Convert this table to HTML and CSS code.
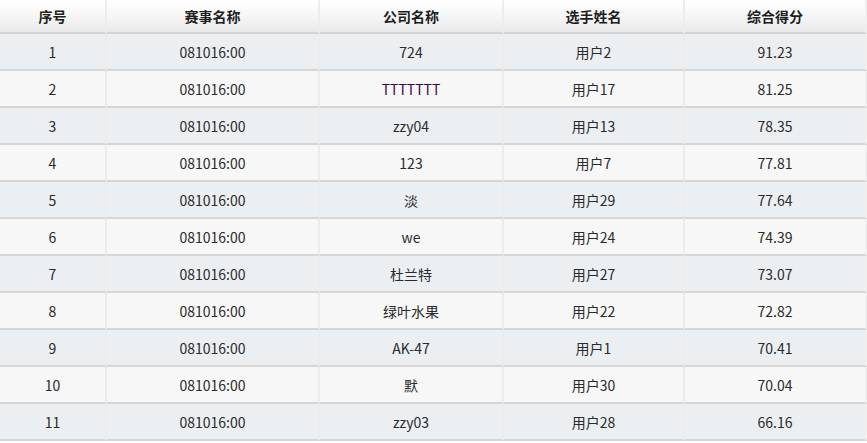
FILE: index.html
```html
<!DOCTYPE html>
<html lang="zh-CN">
<head>
<meta charset="utf-8">
<title>排名</title>
<link rel="stylesheet" href="styles.css">
</head>
<body>
<table class="rank">
  <colgroup>
    <col class="c1"><col class="c2"><col class="c3"><col class="c4"><col class="c5">
  </colgroup>
  <thead>
    <tr><th>序号</th><th>赛事名称</th><th>公司名称</th><th>选手姓名</th><th>综合得分</th></tr>
  </thead>
  <tbody>
    <tr><td>1</td><td>081016:00</td><td>724</td><td>用户2</td><td>91.23</td></tr>
    <tr><td>2</td><td>081016:00</td><td class="purple">TTTTTTT</td><td>用户17</td><td>81.25</td></tr>
    <tr><td>3</td><td>081016:00</td><td>zzy04</td><td>用户13</td><td>78.35</td></tr>
    <tr><td>4</td><td>081016:00</td><td>123</td><td>用户7</td><td>77.81</td></tr>
    <tr><td>5</td><td>081016:00</td><td>淡</td><td>用户29</td><td>77.64</td></tr>
    <tr><td>6</td><td>081016:00</td><td>we</td><td>用户24</td><td>74.39</td></tr>
    <tr><td>7</td><td>081016:00</td><td>杜兰特</td><td>用户27</td><td>73.07</td></tr>
    <tr><td>8</td><td>081016:00</td><td>绿叶水果</td><td>用户22</td><td>72.82</td></tr>
    <tr><td>9</td><td>081016:00</td><td>AK-47</td><td>用户1</td><td>70.41</td></tr>
    <tr><td>10</td><td>081016:00</td><td>默</td><td>用户30</td><td>70.04</td></tr>
    <tr><td>11</td><td>081016:00</td><td>zzy03</td><td>用户28</td><td>66.16</td></tr>
  </tbody>
</table>
</body>
</html>
```
FILE: styles.css
```css
html, body {
  margin: 0;
  padding: 0;
  background: #ffffff;
}
.rank {
  width: 867px;
  border-collapse: separate;
  border-spacing: 0;
  table-layout: fixed;
  font-family: "Noto Sans CJK SC", "Noto Sans", sans-serif;
  font-size: 14px;
  color: #2a2a2a;
}
.c1 { width: 107px; }
.c2 { width: 213px; }
.c3 { width: 184px; }
.c4 { width: 181px; }
.c5 { width: 182px; }
.rank th {
  height: 32px;
  padding: 0;
  font-weight: bold;
  color: #1e1e1e;
  background: linear-gradient(to bottom, #ffffff 0%, #f6f6f6 50%, #e9e9e9 100%);
  border-bottom: 2px solid #d4d4d4;
  border-right: 2px solid #ececec;
  text-align: center;
  vertical-align: middle;
  line-height: 20px;
}
.rank td {
  height: 35px;
  padding: 0;
  text-align: center;
  vertical-align: middle;
  border-bottom: 2px solid #d6d6d6;
  border-right: 2px solid #ececec;
  line-height: 20px;
}
.rank th:last-child, .rank td:last-child {
  border-right: 2px solid #f0f0f0;
}
.rank tbody tr:nth-child(odd) td {
  background: #ebeff2;
}
.rank tbody tr:nth-child(even) td {
  background: #f7f7f7;
}
.purple {
  color: #3b0a45;
}
```
